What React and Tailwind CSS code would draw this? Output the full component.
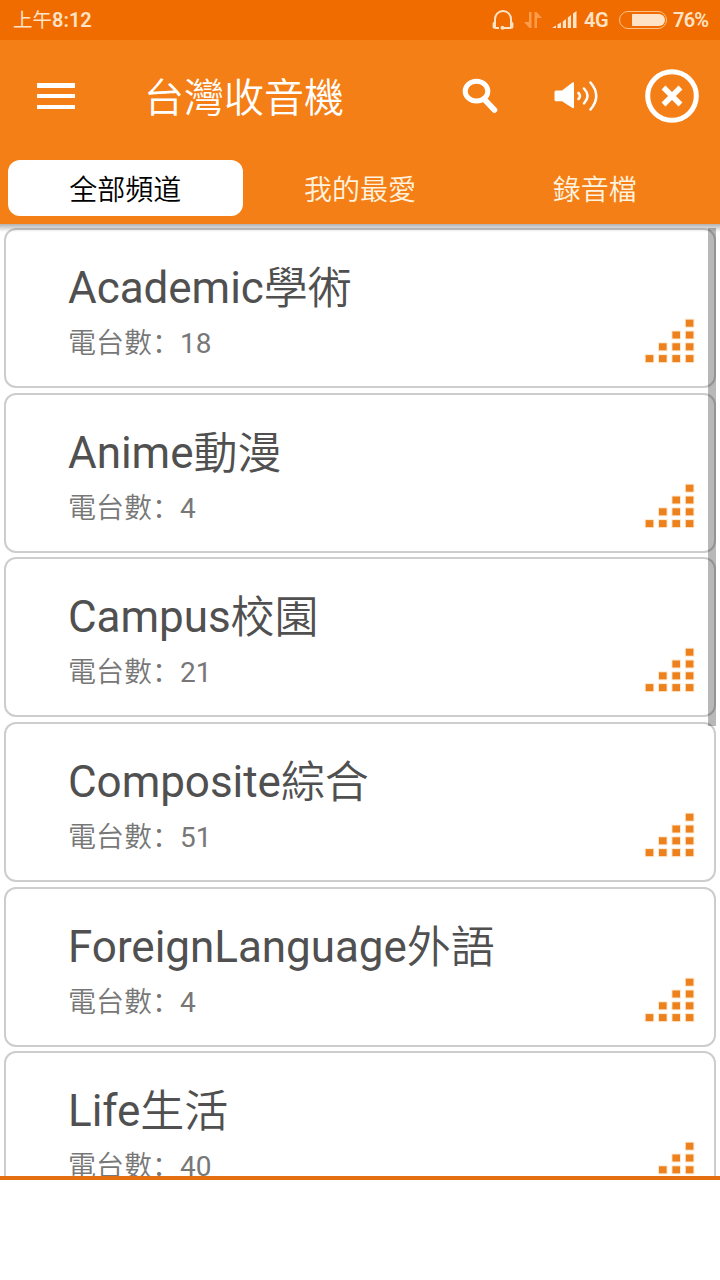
import { useState } from 'react';

const tabs = ['全部頻道', '我的最愛', '錄音檔'];

const categories = [
  { name: 'Academic', label: '學術', count: 18 },
  { name: 'Anime', label: '動漫', count: 4 },
  { name: 'Campus', label: '校園', count: 21 },
  { name: 'Composite', label: '綜合', count: 51 },
  { name: 'ForeignLanguage', label: '外語', count: 4 },
  { name: 'Life', label: '生活', count: 40 },
];

function StatusBar() {
  return (
    <div className="flex h-10 shrink-0 items-center justify-between bg-[#f06c00] pl-[13px] pr-[11px] text-[#ffe3c6]">
      <span className="text-[20px] leading-10 font-semibold">
        <span className="text-[19.5px] font-normal">上午</span>8:12
      </span>
      <div className="flex items-center">
        <svg width="22" height="20" viewBox="0 0 22 20" fill="none" stroke="currentColor">
          <path d="M3 14V9a8 8 0 0 1 16 0v5" strokeWidth="2" />
          <path d="M2.3 13.500v3.500M19.700 13.500v3.500" strokeWidth="3.400" strokeLinecap="round" />
          <path d="M3 18h4M10.500 18h8.500" strokeWidth="2" />
          <circle cx="10.5" cy="17.8" r="2" fill="currentColor" stroke="none" />
        </svg>
        <svg className="ml-2.5" width="18" height="18" viewBox="0 0 18 18" fill="#ff9c4c">
          <path d="M5 1h2.500v16H5.500L0 11h5zM10.500 17H13V7h5L12.500 1h-2z" />
        </svg>
        <svg className="ml-2.5" width="25" height="18" viewBox="0 0 25 18" fill="currentColor">
          <path d="M0 17L4 14.500V17zM5.500 13.500L9 11.500V17H5.500zM10.800 10.500L14 8V17h-3.200zM15.800 6.500L19 4v13h-3.200zM21 2.500L24.500 0v17H21z" />
        </svg>
        <span className="ml-[7px] w-[25px] text-[20px] font-semibold tracking-[-0.4px]">4G</span>
        <div className="ml-[10px] flex h-[18px] w-12 items-center justify-end rounded-full border-[1.5px] border-[#ffc088] p-[1.5px]">
          <div className="h-3 w-[33px] rounded-r-full bg-[#ffe3c6]" />
        </div>
        <span className="ml-[6px] w-[36px] text-[20px] font-semibold tracking-[-0.8px]">76%</span>
      </div>
    </div>
  );
}

function Header() {
  return (
    <div className="flex h-28 items-center">
      <button className="ml-[37px] flex h-[26px] w-[38px] flex-col justify-between">
        <span className="h-[4.500px] w-full bg-white" />
        <span className="h-[4.500px] w-full bg-white" />
        <span className="h-[4.500px] w-full bg-white" />
      </button>
      <h1 className="ml-[69px] w-[311px] pt-[5px] text-[40px] leading-[56px] font-[350]">台灣收音機</h1>
      <button className="ml-[7px]">
        <svg width="36" height="36" viewBox="0 0 36 36" fill="none" stroke="white">
          <ellipse cx="14.500" cy="13.200" rx="11.300" ry="9.900" strokeWidth="5" />
          <path d="M22 21L32.500 32" strokeWidth="5.600" strokeLinecap="round" />
        </svg>
      </button>
      <button className="ml-[56px]">
        <svg width="46" height="32" viewBox="0 0 46 32" fill="none" stroke="white" strokeLinecap="round">
          <path d="M2 10.500h6L18.500 2.500Q20 1.500 20 3.500V27Q20 29 18.500 28L8 21.300H2Q.5 21.300.5 19.800V12Q.5 10.500 2 10.500z" fill="white" stroke="none" />
          <path d="M24.500 13Q27.500 16 24.500 19" strokeWidth="2.500" />
          <path d="M30 8.500Q37 16 30 23.300" strokeWidth="2.500" />
          <path d="M36.500 2.500Q48 16 36.500 29.500" strokeWidth="2.500" />
        </svg>
      </button>
      <button className="ml-[45px]">
        <svg width="54" height="54" viewBox="0 0 54 54" fill="none" stroke="white">
          <circle cx="27" cy="27" r="24.300" strokeWidth="5" />
          <path d="M18.500 18.500l17 17M35.500 18.500l-17 17" strokeWidth="5.400" />
        </svg>
      </button>
    </div>
  );
}

function Steps() {
  const dots = [
    [40.3, 0], [26.900, 11.800], [40.300, 11.800],
    [13.500, 23.600], [26.900, 23.600], [40.300, 23.600],
    [0.200, 35.400], [13.500, 35.400], [26.900, 35.400], [40.300, 35.400],
  ];
  return (
    <svg width="52" height="46" viewBox="-1.500 -1.700 52 46">
      {dots.map(([x, y]) => (
        <g key={`${x}-${y}`}>
          <rect x={x - 1} y={y - 1} width="9.600" height="9" fill="#fde9d0" />
          <rect x={x} y={y} width="7.600" height="7" fill="#ec811e" />
        </g>
      ))}
    </svg>
  );
}

function CategoryCard({ name, label, count }) {
  return (
    <div className="flex h-[160px] shrink-0 items-end justify-between rounded-[12px] border-2 border-[#cdcdcd] bg-white pr-[18px] pl-[62px]">
      <div className="flex h-full flex-col pt-[30px]">
        <span className="h-14 text-[44px] leading-[56px] tracking-[-0.04px] text-[#505050]">
          {name}
          <span className="align-[-1px] leading-none font-[350]">{label}</span>
        </span>
        <span className="h-14 text-[28px] leading-[56px] text-[#777]">
          <span className="leading-none font-[350]">電台數：</span>
          {count}
        </span>
      </div>
      <div className="mb-[22px]">
        <Steps />
      </div>
    </div>
  );
}

export default function App() {
  const [active, setActive] = useState(0);

  return (
    <div
      lang="zh-Hans"
      className="flex h-[1280px] w-[720px] flex-col overflow-hidden bg-white font-[Roboto,'Noto_Sans_CJK_SC',sans-serif]"
    >
      <StatusBar />
      <div className="h-[184px] shrink-0 bg-[#f57f17] text-white">
        <Header />
        <div className="flex h-[72px] pt-2 pl-2">
          {tabs.map((tab, i) => (
            <button
              key={tab}
              onClick={() => setActive(i)}
              className={`h-14 w-[234.700px] rounded-xl pt-[5px] text-[28px] font-[350] ${active === i ? 'bg-white text-black' : 'text-[#fff3df]'}`}
            >
              {tab}
            </button>
          ))}
        </div>
      </div>

      <div className="relative h-[952px] shrink-0 overflow-hidden px-1 pt-1">
        <div className="flex flex-col gap-[4.670px]">
          {categories.map((c) => (
            <CategoryCard key={c.name} {...c} />
          ))}
        </div>
        {/* shadow under the header */}
        <div className="absolute inset-x-0 top-0 h-2 bg-linear-to-b from-black/30 to-transparent" />
        {/* scroll thumb */}
        <div className="absolute top-1 right-1 h-[498px] w-2 bg-black/28" />
      </div>
      <div className="h-1 shrink-0 bg-[#e36f10]" />
    </div>
  );
}
